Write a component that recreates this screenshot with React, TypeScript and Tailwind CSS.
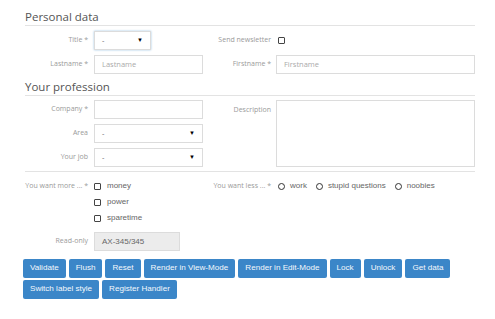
import type { ReactNode } from 'react';

const labelCls =
  "w-[64px] shrink-0 text-right text-[7px] text-[#9a9a9a] font-['Open_Sans',sans-serif] pr-[1px]";
const boxCls = 'h-[19px] border border-[#dcdcdc] px-[7px] flex items-center';
const inputCls = `${boxCls} bg-white text-[7.5px] text-[#aaa] font-['Open_Sans',sans-serif]`;

function Label({ children, className = '' }: { children: ReactNode; className?: string }) {
  return <div className={`${labelCls} ${className}`}>{children}</div>;
}

function Select({ width, focused }: { width: string; focused?: boolean }) {
  return (
    <div
      className={`${inputCls} ${width} justify-between ${
        focused ? 'border-[#8fb8da] shadow-[0_0_2px_#9cc3e3]' : ''
      }`}
    >
      <span className="text-[#666]">-</span>
      <span className="text-[6px] text-black">▼</span>
    </div>
  );
}

function Check({ label }: { label: string }) {
  return (
    <div className="h-[16px] flex items-center gap-[6px]">
      <span className="w-[7px] h-[7px] border border-[#444] rounded-[1px]" />
      <span className="text-[8px] text-[#666] font-['Liberation_Sans',Arial,sans-serif]">{label}</span>
    </div>
  );
}

function Radio({ label }: { label: string }) {
  return (
    <div className="flex items-center gap-[5px]">
      <span className="w-[7px] h-[7px] border-[1.5px] border-[#333] rounded-full" />
      <span className="text-[8px] text-[#666] font-['Liberation_Sans',Arial,sans-serif]">{label}</span>
    </div>
  );
}

const buttons = [
  'Validate',
  'Flush',
  'Reset',
  'Render in View-Mode',
  'Render in Edit-Mode',
  'Lock',
  'Unlock',
  'Get data',
  'Switch label style',
  'Register Handler',
];

export default function App() {
  return (
    <div className="w-[495px] h-[319px] bg-white overflow-hidden pl-[25px] pt-[10px]">
      <div className="w-[450px]">
        <h3 className="text-[11.5px] leading-[14px] text-[#555] font-['Open_Sans',sans-serif] border-b border-[#e3e3e3] pb-[1px]">
          Personal data
        </h3>

        <div className="mt-[5px] flex flex-col gap-[5px]">
          <div className="flex items-center">
            <div className="w-[178px] flex items-center gap-[5px]">
              <Label>Title *</Label>
              <Select width="w-[57px]" focused />
            </div>
            <div className="flex items-center gap-[5px] ml-[5px]">
              <Label>Send newsletter</Label>
              <span className="ml-[1px] w-[7px] h-[7px] border border-[#444] rounded-[1px]" />
            </div>
          </div>
          <div className="flex items-center">
            <div className="w-[178px] flex items-center gap-[5px]">
              <Label>Lastname *</Label>
              <div className={`${inputCls} w-[109px]`}>Lastname</div>
            </div>
            <div className="flex items-center gap-[4px] ml-[5px]">
              <Label>Firstname *</Label>
              <div className={`${inputCls} w-[199px]`}>Firstname</div>
            </div>
          </div>
        </div>

        <h3 className="mt-[6px] text-[11.5px] leading-[14px] text-[#555] font-['Open_Sans',sans-serif] border-b border-[#e3e3e3] pb-[1px]">
          Your profession
        </h3>

        <div className="mt-[4px] flex pb-[4px] border-b border-[#e3e3e3]">
          <div className="w-[178px] flex flex-col gap-[5px]">
            <div className="flex items-center gap-[5px]">
              <Label>Company *</Label>
              <div className={`${inputCls} w-[109px]`} />
            </div>
            <div className="flex items-center gap-[5px]">
              <Label>Area</Label>
              <Select width="w-[109px]" />
            </div>
            <div className="flex items-center gap-[5px]">
              <Label>Your job</Label>
              <Select width="w-[109px]" />
            </div>
          </div>
          <div className="flex items-start gap-[4px] ml-[5px]">
            <Label className="mt-[5px]">Description</Label>
            <div className="w-[199px] h-[67px] border border-[#dcdcdc]" />
          </div>
        </div>

        <div className="mt-[6px] flex">
          <div className="w-[178px] flex gap-[5px]">
            <Label className="h-[16px] leading-[16px]">You want more ... *</Label>
            <div className="flex flex-col">
              <Check label="money" />
              <Check label="power" />
              <Check label="sparetime" />
            </div>
          </div>
          <div className="flex h-[16px] items-center gap-[6px] ml-[5px]">
            <Label>You want less ... *</Label>
            <div className="flex items-center gap-[9px]">
              <Radio label="work" />
              <Radio label="stupid questions" />
              <Radio label="noobies" />
            </div>
          </div>
        </div>

        <div className="mt-[6px] flex items-center gap-[5px]">
          <Label>Read-only</Label>
          <div className={`${boxCls} w-[86px] bg-[#ececec] text-[#666] text-[8px] font-['Liberation_Sans',Arial,sans-serif]`}>
            AX-345/345
          </div>
        </div>
      </div>

      <div className="-ml-[2px] mt-[8px] w-[455px] flex flex-wrap gap-x-[3px] gap-y-[2px]">
        {buttons.map((b) => (
          <button
            key={b}
            className="h-[19px] px-[7px] rounded-[2px] bg-[#3b86c8] text-[#f4f8fc] text-[8.1px] font-normal font-['Liberation_Sans',Arial,sans-serif]"
          >
            {b}
          </button>
        ))}
      </div>
    </div>
  );
}
